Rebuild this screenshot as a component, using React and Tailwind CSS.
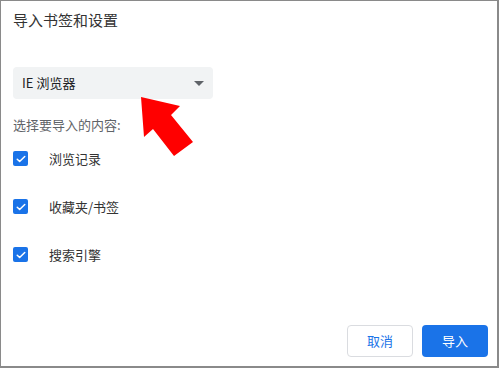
import React from "react"

const items = ["浏览记录", "收藏夹/书签", "搜索引擎"]

const CheckBox = () => (
  <span className="flex h-[15px] w-[15px] items-center justify-center rounded-[2px] bg-[#1a73e8]">
    <svg viewBox="0 0 16 16" className="h-[12px] w-[12px]" fill="none">
      <path d="M3 8.3l3.2 3.1L13 4.7" stroke="white" strokeWidth="2" strokeLinecap="round" strokeLinejoin="round" />
    </svg>
  </span>
)

export default function App() {
  return (
    <div
      className="relative flex h-[368px] w-[499px] flex-col border-t border-l border-r-2 border-b-2 border-[#8a8a8a] bg-white"
      style={{ fontFamily: '"Noto Sans CJK SC", "Noto Sans", sans-serif' }}
    >
      <div className="px-[12px] pt-[8px] text-[15px] leading-[22px] text-[#333]">导入书签和设置</div>

      <div className="mt-[36px] px-[12px]">
        <div className="flex h-[32px] w-[200px] items-center justify-between rounded-[4px] bg-[#f1f3f4] pl-[9px] pr-[9px] text-[13px] text-[#202124]">
          <span>IE 浏览器</span>
          <svg viewBox="0 0 10 5" className="h-[5px] w-[10px]">
            <path d="M0 0h10L5 5z" fill="#5f6368" />
          </svg>
        </div>
      </div>

      <div className="mt-[16px] px-[12px] text-[13px] leading-[20px] text-[#5f6368]">选择要导入的内容:</div>

      <div className="mt-[16px] flex flex-col gap-[33px] px-[12px]">
        {items.map((t) => (
          <div key={t} className="flex h-[15px] items-center">
            <CheckBox />
            <span className="ml-[21px] text-[13px] text-[#333]">{t}</span>
          </div>
        ))}
      </div>

      <div className="mt-auto flex justify-end gap-[9px] pb-[9px] pr-[9px]">
        <button className="h-[32px] w-[66px] rounded-[4px] border border-[#dadce0] bg-white text-[13px] text-[#1a73e8]">取消</button>
        <button className="h-[32px] w-[66px] rounded-[4px] bg-[#1a73e8] text-[13px] text-white">导入</button>
      </div>

      <svg className="absolute left-[138px] top-[94px] h-[64px] w-[56px]" viewBox="138 94 56 64">
        <polygon points="140,96 179,105 170,114 192,141 173,155 152,128 143,136" fill="#ff0000" />
      </svg>
    </div>
  )
}
